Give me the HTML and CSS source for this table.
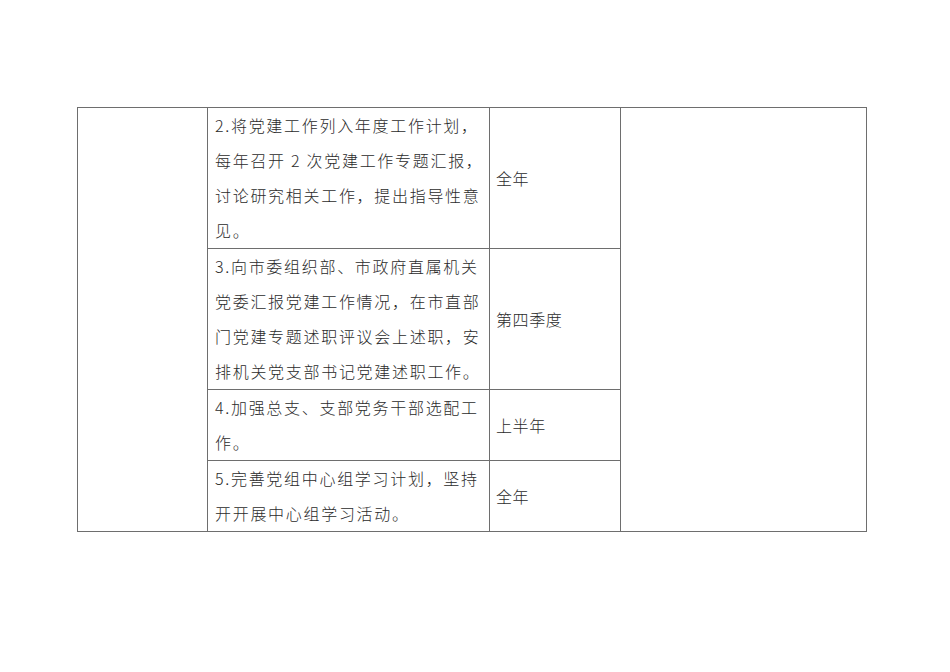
FILE: index.html
```html
<!DOCTYPE html>
<html lang="zh-CN">
<head>
<meta charset="utf-8">
<title>党建工作计划</title>
<link rel="stylesheet" href="styles.css">
</head>
<body>
<div class="page">
  <table class="plan">
    <colgroup>
      <col class="c1"><col class="c2"><col class="c3"><col class="c4">
    </colgroup>
    <tr>
      <td class="blank" rowspan="4"></td>
      <td class="task">2.将党建工作列入年度工作计划，<br>每年召开 2 次党建工作专题汇报，<br>讨论研究相关工作，提出指导性意<br>见。</td>
      <td class="time">全年</td>
      <td class="blank" rowspan="4"></td>
    </tr>
    <tr>
      <td class="task">3.向市委组织部、市政府直属机关<br>党委汇报党建工作情况，在市直部<br>门党建专题述职评议会上述职，安<br>排机关党支部书记党建述职工作。</td>
      <td class="time">第四季度</td>
    </tr>
    <tr>
      <td class="task">4.加强总支、支部党务干部选配工<br>作。</td>
      <td class="time">上半年</td>
    </tr>
    <tr>
      <td class="task">5.完善党组中心组学习计划，坚持<br>开开展中心组学习活动。</td>
      <td class="time">全年</td>
    </tr>
  </table>
</div>
</body>
</html>
```

FILE: styles.css
```css
html, body {
  margin: 0;
  padding: 0;
  background: #ffffff;
}

.page {
  padding: 107px 0 0 77px;
}

.plan {
  border-collapse: collapse;
  table-layout: fixed;
  width: 789px;
  font-family: "Noto Sans CJK SC", "Noto Sans", sans-serif;
  font-size: 16px;
  color: #2b2b2b;
}

.c1 { width: 130px; }
.c2 { width: 282px; }
.c3 { width: 131px; }
.c4 { width: 246px; }

.plan td {
  border: 1px solid #6e6e6e;
  padding: 0;
  vertical-align: middle;
}

.task {
  line-height: 35px;
  padding: 0 0 0 7px !important;
  letter-spacing: 1.7px;
  white-space: nowrap;
  font-weight: 300;
}

.time {
  padding: 0 0 0 6px !important;
  letter-spacing: 0.6px;
  font-weight: 300;
}
```
